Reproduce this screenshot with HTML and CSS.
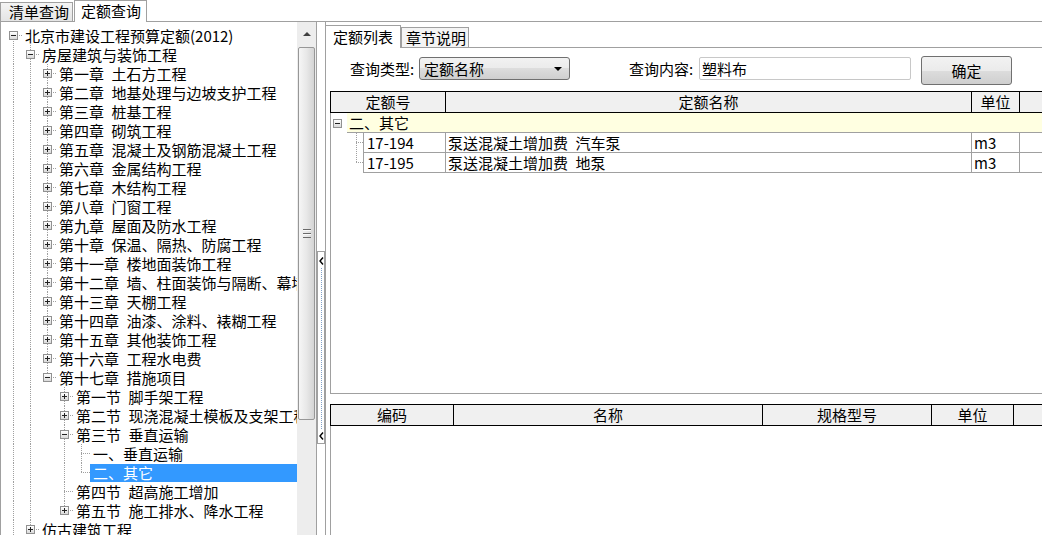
FILE: index.html
```html
<!DOCTYPE html>
<html lang="zh-CN">
<head>
  <meta charset="UTF-8" />
  <title>定额查询</title>
  <link rel="stylesheet" href="styles.css">
</head>
<body>

  <div class="topbar">
    <div class="toptab">清单查询</div>
    <div class="toptab active">定额查询</div>
  </div>

  <div class="main">
    <!-- chapter tree -->
    <div class="left">
      <div class="tree" id="tree"></div>
      <div class="vscroll">
        <div class="vscroll-up"><span class="arrow-up"></span></div>
        <div class="vscroll-thumb"><span class="grip"></span></div>
      </div>
    </div>

    <div class="splitter">
      <div class="collapse">
        <svg width="5" height="8" viewBox="0 0 5 8"><path d="M4 0.5 L1 4 L4 7.5" fill="none" stroke="#000" stroke-width="1.4"/></svg>
        <div class="collapse-line"></div>
        <svg width="5" height="8" viewBox="0 0 5 8"><path d="M4 0.5 L1 4 L4 7.5" fill="none" stroke="#000" stroke-width="1.4"/></svg>
      </div>
    </div>

    <!-- quota list -->
    <div class="right">
      <div class="subtabs">
        <div class="subtab active">定额列表</div>
        <div class="subtab">章节说明</div>
      </div>

      <div class="page">
        <div class="query">
          <label class="qlabel">查询类型:</label>
          <div class="select"><span>定额名称</span><span class="caret"></span></div>
          <label class="qlabel second">查询内容:</label>
          <div class="input">塑料布</div>
          <button class="btn">确定</button>
        </div>

        <div class="grid top-grid">
          <div class="ghead">
            <div class="hc w-code">定额号</div>
            <div class="hc w-name">定额名称</div>
            <div class="hc w-unit">单位</div>
            <div class="hc w-rest"></div>
          </div>
          <div class="row group">
            <div class="glead"><span class="box"></span></div>
            <div class="gtitle">二、其它</div>
          </div>
          <div class="row">
            <div class="lead first"></div>
            <div class="c c-code">17-194</div>
            <div class="c w-name">泵送混凝土增加费&ensp;汽车泵</div>
            <div class="c w-unit">m3</div>
            <div class="c w-rest"></div>
          </div>
          <div class="row">
            <div class="lead last"></div>
            <div class="c c-code">17-195</div>
            <div class="c w-name">泵送混凝土增加费&ensp;地泵</div>
            <div class="c w-unit">m3</div>
            <div class="c w-rest"></div>
          </div>
        </div>

        <div class="grid bottom-grid">
          <div class="ghead">
            <div class="hc w-bcode">编码</div>
            <div class="hc w-bname">名称</div>
            <div class="hc w-spec">规格型号</div>
            <div class="hc w-bunit">单位</div>
            <div class="hc w-rest"></div>
          </div>
        </div>
      </div>
    </div>
  </div>

  <script>
    const S = '\u2002';
    const rows = [
      [0, '北京市建设工程预算定额(2012)', '-'],
      [1, '房屋建筑与装饰工程', '-'],
      [2, '第一章' + S + '土石方工程', '+'],
      [2, '第二章' + S + '地基处理与边坡支护工程', '+'],
      [2, '第三章' + S + '桩基工程', '+'],
      [2, '第四章' + S + '砌筑工程', '+'],
      [2, '第五章' + S + '混凝土及钢筋混凝土工程', '+'],
      [2, '第六章' + S + '金属结构工程', '+'],
      [2, '第七章' + S + '木结构工程', '+'],
      [2, '第八章' + S + '门窗工程', '+'],
      [2, '第九章' + S + '屋面及防水工程', '+'],
      [2, '第十章' + S + '保温、隔热、防腐工程', '+'],
      [2, '第十一章' + S + '楼地面装饰工程', '+'],
      [2, '第十二章' + S + '墙、柱面装饰与隔断、幕墙工程', '+'],
      [2, '第十三章' + S + '天棚工程', '+'],
      [2, '第十四章' + S + '油漆、涂料、裱糊工程', '+'],
      [2, '第十五章' + S + '其他装饰工程', '+'],
      [2, '第十六章' + S + '工程水电费', '+'],
      [2, '第十七章' + S + '措施项目', '-'],
      [3, '第一节' + S + '脚手架工程', '+'],
      [3, '第二节' + S + '现浇混凝土模板及支架工程', '+'],
      [3, '第三节' + S + '垂直运输', '-'],
      [4, '一、垂直运输', ''],
      [4, '二、其它', '', true],
      [3, '第四节' + S + '超高施工增加', ''],
      [3, '第五节' + S + '施工排水、降水工程', '+'],
      [1, '仿古建筑工程', '+']
    ];

    function hasNext(i) {
      const lvl = rows[i][0];
      for (let j = i + 1; j < rows.length; j++) {
        if (rows[j][0] < lvl) return false;
        if (rows[j][0] === lvl) return true;
      }
      return lvl === 0;
    }

    function ancestor(i, lvl) {
      for (let j = i - 1; j >= 0; j--) {
        if (rows[j][0] === lvl) return j;
      }
      return -1;
    }

    const tree = document.getElementById('tree');
    rows.forEach(([lvl, text, sign, selected], i) => {
      const row = document.createElement('div');
      row.className = 'node';
      for (let k = 0; k < lvl; k++) {
        const g = document.createElement('span');
        g.className = hasNext(ancestor(i, k)) ? 'g v' : 'g';
        row.appendChild(g);
      }
      const b = document.createElement('span');
      b.className = 'b' + (i > 0 ? ' up' : '') + (hasNext(i) ? ' down' : '');
      if (sign) {
        const box = document.createElement('span');
        box.className = sign === '+' ? 'box plus' : 'box';
        b.appendChild(box);
      }
      row.appendChild(b);
      const t = document.createElement('span');
      t.className = selected ? 't sel' : 't';
      t.textContent = text;
      row.appendChild(t);
      tree.appendChild(row);
    });
  </script>

</body>
</html>
```

FILE: styles.css
```css
* {
  box-sizing: border-box;
}

body {
  margin: 0;
  width: 1042px;
  height: 535px;
  overflow: hidden;
  background: #fff;
  color: #000;
  font-family: "Noto Sans CJK SC", "Noto Sans", sans-serif;
  font-size: 15px;
  line-height: 19px;
}

/* top tabs */
.topbar {
  display: flex;
  align-items: flex-end;
  height: 22px;
  border-bottom: 1px solid #a0a0a0;
}

.toptab {
  width: 73px;
  height: 19px;
  padding-left: 8px;
  line-height: 17px;
  border: 1px solid #a0a0a0;
  border-bottom: none;
  background: linear-gradient(#f4f4f4, #e4e4e4);
}

.toptab.active {
  height: 22px;
  margin-left: 1px;
  margin-bottom: -1px;
  padding-left: 6px;
  line-height: 19px;
  background: #fff;
}

.main {
  display: flex;
  height: 513px;
}

/* tree */
.left {
  display: flex;
  width: 317px;
  border-left: 1px solid #a0a0a0;
  border-right: 1px solid #a0a0a0;
}

.tree {
  flex: 1;
  overflow: hidden;
  padding: 4px 0 0 4px;
}

.node {
  display: flex;
  align-items: center;
  height: 19px;
  white-space: nowrap;
}

.g,
.b {
  flex: none;
  display: flex;
  align-items: center;
  width: 17px;
  height: 19px;
}

.g.v {
  background: repeating-linear-gradient(#a0a0a0 0 1px, transparent 1px 2px) 8px 0 / 1px 19px no-repeat;
}

.b {
  background: repeating-linear-gradient(to right, #a0a0a0 0 1px, transparent 1px 2px) 8px 9px / 9px 1px no-repeat;
}

.b.up {
  background:
    repeating-linear-gradient(to right, #a0a0a0 0 1px, transparent 1px 2px) 8px 9px / 9px 1px no-repeat,
    repeating-linear-gradient(#a0a0a0 0 1px, transparent 1px 2px) 8px 0 / 1px 10px no-repeat;
}

.b.down {
  background:
    repeating-linear-gradient(to right, #a0a0a0 0 1px, transparent 1px 2px) 8px 9px / 9px 1px no-repeat,
    repeating-linear-gradient(#a0a0a0 0 1px, transparent 1px 2px) 8px 9px / 1px 10px no-repeat;
}

.b.up.down {
  background:
    repeating-linear-gradient(to right, #a0a0a0 0 1px, transparent 1px 2px) 8px 9px / 9px 1px no-repeat,
    repeating-linear-gradient(#a0a0a0 0 1px, transparent 1px 2px) 8px 0 / 1px 19px no-repeat;
}

.box {
  display: block;
  width: 9px;
  height: 9px;
  margin-left: 4px;
  border: 1px solid #919191;
  background:
    linear-gradient(#222, #222) 1px 3px / 5px 1px no-repeat,
    linear-gradient(#fff, #dadada);
}

.box.plus {
  background:
    linear-gradient(#222, #222) 1px 3px / 5px 1px no-repeat,
    linear-gradient(#222, #222) 3px 1px / 1px 5px no-repeat,
    linear-gradient(#fff, #dadada);
}

.t {
  flex: none;
  height: 18px;
  padding: 0 3px;
  line-height: 18px;
}

.t.sel {
  flex: 1;
  background: #3399ff;
  color: #fff;
}

/* tree scrollbar */
.vscroll {
  width: 19px;
  background: #ededed;
}

.vscroll-up {
  display: flex;
  align-items: center;
  justify-content: center;
  height: 24px;
}

.arrow-up {
  width: 0;
  height: 0;
  border-left: 4px solid transparent;
  border-right: 4px solid transparent;
  border-bottom: 4px solid #404040;
}

.vscroll-thumb {
  display: flex;
  align-items: center;
  justify-content: center;
  width: 17px;
  height: 373px;
  margin: 1px 0 0 1px;
  border: 1px solid #979797;
  border-radius: 2px;
  background: linear-gradient(to right, #f6f6f6, #e8e8e8 50%, #d4d4d4);
}

.grip {
  width: 8px;
  height: 9px;
  background: repeating-linear-gradient(#6a6a6a 0 1px, #fafafa 1px 2px, transparent 2px 4px);
}

/* splitter */
.splitter {
  width: 8px;
}

.collapse {
  display: flex;
  flex-direction: column;
  align-items: center;
  height: 193px;
  margin-top: 229px;
  padding: 5px 0 3px;
  border: 1px solid #a0a0a0;
  background: #fff;
}

.collapse-line {
  flex: 1;
  margin: 3px 0;
  border-left: 1px dotted #7fa0c8;
}

/* right side */
.right {
  flex: 1;
  display: flex;
  flex-direction: column;
  overflow: hidden;
  border-left: 1px solid #a0a0a0;
}

.subtabs {
  display: flex;
  align-items: flex-end;
  height: 26px;
  border-bottom: 1px solid #a0a0a0;
}

.subtab {
  width: 68px;
  height: 20px;
  padding-left: 4px;
  line-height: 19px;
  border: 1px solid #a0a0a0;
  border-bottom: none;
  background: #f4f4f4;
}

.subtab.active {
  width: 75px;
  height: 23px;
  margin-bottom: -1px;
  padding-left: 7px;
  line-height: 21px;
  border-left: none;
  background: #fff;
}

.page {
  flex: 1;
  padding: 8px 0 0 4px;
}

.query {
  display: flex;
  align-items: flex-start;
  height: 29px;
  margin-left: 20px;
}

.qlabel {
  width: 69px;
  margin-top: 1px;
  line-height: 23px;
}

.qlabel.second {
  width: 70px;
  margin-left: 59px;
}

.select {
  display: flex;
  align-items: center;
  width: 151px;
  height: 23px;
  margin-top: 1px;
  padding-left: 4px;
  border: 1px solid #707070;
  border-radius: 3px;
  background: linear-gradient(#f2f2f2, #ebebeb 50%, #dddddd 50%, #cfcfcf);
}

.caret {
  margin-left: auto;
  margin-right: 7px;
  border-left: 4px solid transparent;
  border-right: 4px solid transparent;
  border-top: 4px solid #000;
}

.input {
  width: 212px;
  height: 23px;
  margin-top: 1px;
  padding-left: 2px;
  line-height: 21px;
  border: 1px solid #c8c8c8;
  border-radius: 2px;
}

.btn {
  width: 91px;
  height: 29px;
  margin-left: 10px;
  padding: 0;
  font: inherit;
  color: #000;
  border: 1px solid #707070;
  border-radius: 3px;
  background: linear-gradient(#f2f2f2, #ebebeb 50%, #dddddd 50%, #cfcfcf);
}

/* grids */
.grid {
  width: 760px;
  border-left: 1px solid #a0a0a0;
}

.top-grid {
  height: 303px;
  margin-top: 6px;
  border-bottom: 1px solid #a0a0a0;
}

.bottom-grid {
  height: 131px;
  margin-top: 10px;
}

.ghead {
  display: flex;
  height: 22px;
  margin-left: -1px;
  border: 1px solid #000;
  border-right: none;
}

.hc {
  flex: none;
  line-height: 20px;
  text-align: center;
  background: #f0f0f0;
  border-right: 1px solid #000;
}

.w-code { width: 115px; }
.w-name { width: 526px; }
.w-unit { width: 48px; }
.w-rest { width: 60px; }
.w-bcode { width: 123px; }
.w-bname { width: 309px; }
.w-spec { width: 169px; }
.w-bunit { width: 82px; }

.row {
  display: flex;
  height: 20px;
}

.glead {
  display: flex;
  align-items: center;
  width: 16px;
  padding-left: 2px;
}

.glead .box {
  margin-left: 0;
}

.gtitle {
  flex: 1;
  padding-left: 2px;
  background: #ffffe1;
  border-bottom: 1px solid #a0a0a0;
}

.lead {
  flex: none;
  width: 32px;
}

.lead.first {
  background:
    repeating-linear-gradient(to right, #a0a0a0 0 1px, transparent 1px 2px) 25px 9px / 7px 1px no-repeat,
    repeating-linear-gradient(#a0a0a0 0 1px, transparent 1px 2px) 25px 0 / 1px 20px no-repeat;
}

.lead.last {
  background:
    repeating-linear-gradient(to right, #a0a0a0 0 1px, transparent 1px 2px) 25px 9px / 7px 1px no-repeat,
    repeating-linear-gradient(#a0a0a0 0 1px, transparent 1px 2px) 25px 0 / 1px 10px no-repeat;
}

.c {
  flex: none;
  padding-left: 2px;
  border-right: 1px solid #a0a0a0;
  border-bottom: 1px solid #a0a0a0;
}

.c-code {
  width: 83px;
  padding-left: 3px;
  border-left: 1px solid #a0a0a0;
}
```
